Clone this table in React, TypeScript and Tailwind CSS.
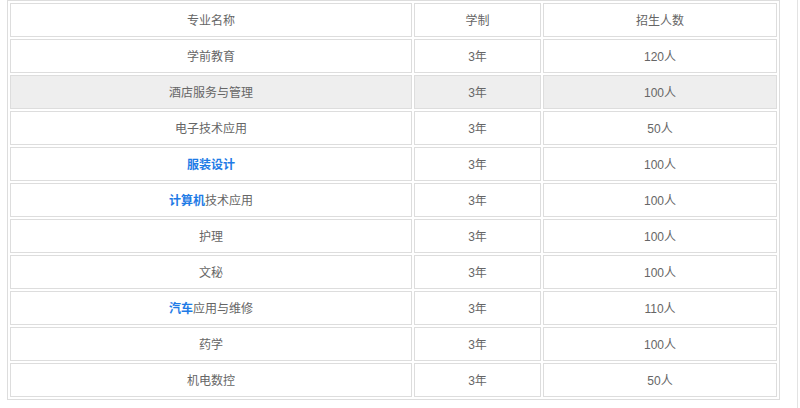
import React from 'react'

type Row = {
    name: React.ReactNode
    years: string
    count: string
    shaded?: boolean
}

const Link = ({ children }: { children: React.ReactNode }) => (
    <a href="#" className="text-[#1e7be6] font-bold">{children}</a>
)

const rows: Row[] = [
    { name: '学前教育', years: '3年', count: '120人' },
    { name: '酒店服务与管理', years: '3年', count: '100人', shaded: true },
    { name: '电子技术应用', years: '3年', count: '50人' },
    { name: <Link>服装设计</Link>, years: '3年', count: '100人' },
    { name: <><Link>计算机</Link>技术应用</>, years: '3年', count: '100人' },
    { name: '护理', years: '3年', count: '100人' },
    { name: '文秘', years: '3年', count: '100人' },
    { name: <><Link>汽车</Link>应用与维修</>, years: '3年', count: '110人' },
    { name: '药学', years: '3年', count: '100人' },
    { name: '机电数控', years: '3年', count: '50人' },
]

const cell = 'border border-[#dddddd] h-[34px] p-0 pt-[2px] text-center align-middle'

export default function App() {
    return (
        <div
            className="w-[798px] h-[408px] bg-white border-r border-[#e3e3e3] text-[12px] text-[#666666]"
            style={{ fontFamily: '"Liberation Sans", "Noto Sans CJK SC", sans-serif' }}
        >
            <table className="ml-[7px] w-[773px] border border-[#dddddd] border-separate border-spacing-[2px] table-fixed">
                <colgroup>
                    <col className="w-[402px]" />
                    <col className="w-[127px]" />
                    <col />
                </colgroup>
                <thead>
                    <tr>
                        <th className={`${cell} font-normal`}>专业名称</th>
                        <th className={`${cell} font-normal`}>学制</th>
                        <th className={`${cell} font-normal`}>招生人数</th>
                    </tr>
                </thead>
                <tbody>
                    {rows.map((r, i) => (
                        <tr key={i} className={r.shaded ? 'bg-[#eeeeee]' : ''}>
                            <td className={cell}>{r.name}</td>
                            <td className={cell}>{r.years}</td>
                            <td className={cell}>{r.count}</td>
                        </tr>
                    ))}
                </tbody>
            </table>
        </div>
    )
}
